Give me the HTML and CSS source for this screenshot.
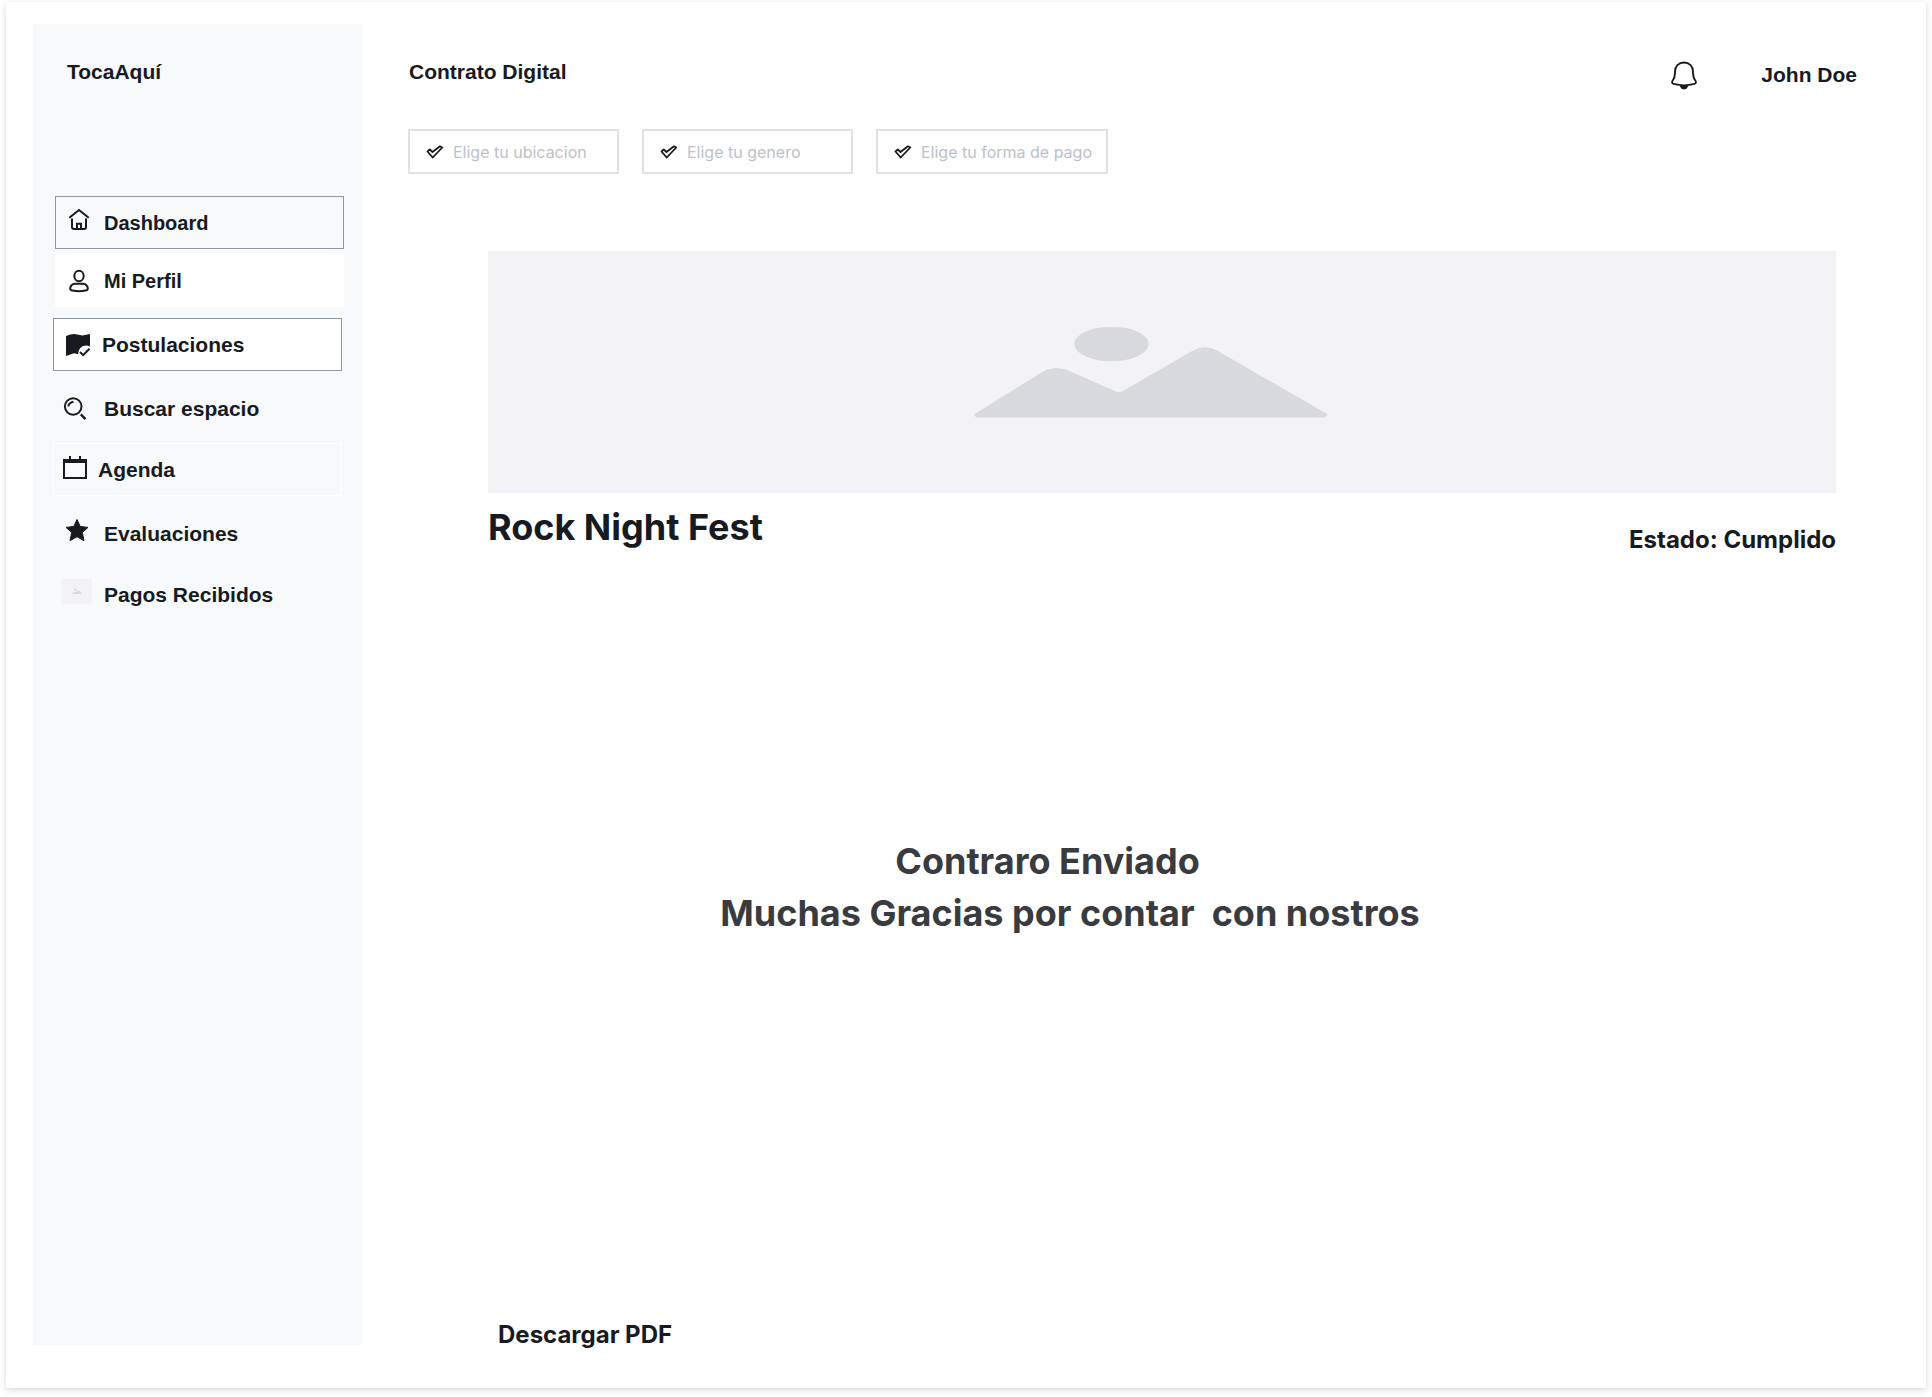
FILE: index.html
```html
<!DOCTYPE html>
<html lang="es">
<head>
<meta charset="utf-8">
<meta name="viewport" content="width=device-width, initial-scale=1">
<title>TocaAquí - Contrato Digital</title>
<link rel="stylesheet" href="styles.css">
</head>
<body>
<div class="page">
  <aside class="sidebar">
    <a class="brand" href="#">TocaAquí</a>
    <nav class="nav" aria-label="Principal">
      <a class="nav-item nav-item--small nav-item--outlined" href="#">
        <svg class="nav-icon" viewBox="0 0 36 35" fill="none" stroke="currentColor" stroke-width="2" aria-hidden="true"><path d="M9.3 12.8 19 5l9.700 7.800M12 13.500V22q0 2 2 2h10q2 0 2-2V13.500M17 24v-5.200h4V24"/></svg>
        <span>Dashboard</span>
      </a>
      <a class="nav-item nav-item--small nav-item--filled" href="#">
        <svg class="nav-icon" viewBox="0 0 36 35" fill="none" stroke="currentColor" stroke-width="2" aria-hidden="true"><ellipse cx="19" cy="13" rx="4.700" ry="5.200"/><path d="M15 20.800h8c3.200 0 4.800 2.700 4.800 4.700 0 1.300-1 1.900-2.300 2.100-4.300.7-8.700.7-13 0-1.300-.2-2.300-.8-2.300-2.100 0-2 1.600-4.700 4.800-4.700z"/></svg>
        <span>Mi Perfil</span>
      </a>
      <a class="nav-item nav-item--spaced nav-item--wide nav-item--outlined nav-item--filled" href="#" aria-current="page">
        <svg class="nav-icon" viewBox="0 0 36 35" aria-hidden="true"><path fill="currentColor" d="M8 9q4-2 8.500-2l8 1.600L32 7v12.500q-3.500-2-7.500-.2-4.200 2.500-4.300 8l-4.200-1L8 29z"/><path fill="none" stroke="currentColor" stroke-width="2" d="m22 25 3.200 3.200 6.300-6.400"/></svg>
        <span>Postulaciones</span>
      </a>
      <a class="nav-item nav-item--spaced" href="#">
        <svg class="nav-icon" viewBox="0 0 36 35" fill="none" stroke="currentColor" stroke-width="2" aria-hidden="true"><circle cx="13.200" cy="15.500" r="8.300"/><path d="M8.300 15.500q.5-4 5.200-4.800"/><path stroke-width="2.400" d="m20.800 23.300 4.700 4.900"/></svg>
        <span>Buscar espacio</span>
      </a>
      <a class="nav-item nav-item--loose nav-item--wide nav-item--light nav-item--tight" href="#">
        <svg class="nav-icon" viewBox="0 0 36 35" aria-hidden="true"><path fill="currentColor" fill-rule="evenodd" d="M5 7h6V4h2v3h8V4h2v3h6v20H5zM7 11v14h20V11z"/></svg>
        <span>Agenda</span>
      </a>
      <a class="nav-item nav-item--spaced" href="#">
        <svg class="nav-icon" viewBox="0 0 36 35" aria-hidden="true"><path fill="currentColor" stroke="currentColor" stroke-linejoin="round" d="m17 3.500 3.200 6.900 7.800 1-5.700 5.100 1.700 8.200-7-4-7 4 1.700-8.200L6 11.400l7.800-1z"/></svg>
        <span>Evaluaciones</span>
      </a>
      <a class="nav-item nav-item--loose" href="#">
        <svg class="nav-icon" viewBox="0 0 36 35" aria-hidden="true"><path fill="#f3f3f5" d="M1 2h31v25H1z"/><circle cx="15.500" cy="12.800" r="1.200" fill="#d9dade"/><path fill="#d9dade" d="m11.500 17 3-2.500 1.500.8 2.500-2.300 3.500 4z"/></svg>
        <span>Pagos Recibidos</span>
      </a>
    </nav>
  </aside>

  <main class="main">
    <header class="header">
      <h1 class="title">Contrato Digital</h1>
      <div class="user">
        <button class="bell" type="button" aria-label="Notificaciones">
          <svg viewBox="0 0 28 30" width="28" height="30" fill="none" stroke="currentColor" stroke-width="1.900" aria-hidden="true"><path d="M14 2.500C8.500 2.500 5 6.500 5 11.500c0 4.500-.3 6.300-2 8.500-1.500 2-1.200 3.300.7 3.900 6 1.700 14.600 1.700 20.600 0 1.900-.6 2.200-1.900.7-3.900-1.700-2.200-2-4-2-8.500 0-5-3.500-9-9-9zM11 26.500q.7 2 3 2t3-2z"/></svg>
        </button>
        <span class="user-name">John Doe</span>
      </div>
    </header>

    <form class="filters">
      <label class="filter">
        <svg class="check" viewBox="0 0 18 14" aria-hidden="true"><path d="M1.500 6.500 3.800 4.500 6.500 7 14 1.300l2.300 1.200L6.700 12.500z"/></svg>
        <input class="filter-input" type="text" placeholder="Elige tu ubicacion" aria-label="Ubicacion">
      </label>
      <label class="filter">
        <svg class="check" viewBox="0 0 18 14" aria-hidden="true"><path d="M1.500 6.500 3.800 4.500 6.500 7 14 1.300l2.300 1.200L6.700 12.500z"/></svg>
        <input class="filter-input" type="text" placeholder="Elige tu genero" aria-label="Genero">
      </label>
      <label class="filter filter--wide">
        <svg class="check" viewBox="0 0 18 14" aria-hidden="true"><path d="M1.500 6.500 3.800 4.500 6.500 7 14 1.300l2.300 1.200L6.700 12.500z"/></svg>
        <input class="filter-input" type="text" placeholder="Elige tu forma de pago" aria-label="Forma de pago">
      </label>
    </form>

    <section class="event">
      <div class="banner">
        <svg viewBox="0 0 354 91" width="354" height="91" fill="#d9dade" aria-hidden="true"><ellipse cx="137.500" cy="17" rx="37.300" ry="17.200"/><path d="M1.500 86.500 69 44.500Q80 38.500 92 42.500L142 64.500q3 1.200 6 0L219 23.500q12-6.500 24 0L352.500 86.500q3 3-2.500 4H4q-5.500-1-2.500-4z"/></svg>
      </div>
      <div class="event-head">
        <h2 class="event-name">Rock Night Fest</h2>
        <p class="status">Estado: Cumplido</p>
      </div>
      <div class="message">
        <p class="message-line message-line--first">Contraro Enviado</p>
        <p class="message-line">Muchas Gracias por contar&nbsp; con nostros</p>
      </div>
      <a class="download" href="#">Descargar PDF</a>
    </section>
  </main>
</div>
</body>
</html>
```
FILE: styles.css
```css
* {
  box-sizing: border-box;
}

body {
  margin: 0;
  min-height: 100vh;
  padding: 2px 6px 9px;
  display: flex;
  background: #fff;
  color: #171a1f;
  font-family: Inter, "Liberation Sans", sans-serif;
}

h1, h2, p {
  margin: 0;
}

a {
  color: inherit;
  text-decoration: none;
}

.page {
  flex: 1;
  display: flex;
  gap: 46px;
  padding: 22px 69px 43px 27px;
  background: #fff;
  box-shadow: 0 2px 6px rgba(23, 26, 31, 0.16);
}

.brand,
.nav-item,
.title,
.user-name {
  font-family: "Liberation Sans", Arial, sans-serif;
  font-size: 21px;
  font-weight: 700;
  line-height: 24px;
}

/* Sidebar */

.sidebar {
  flex: 0 0 330px;
  padding: 36px 19px 36px 20px;
  background: #f8f9fb;
}

.brand {
  display: block;
  padding-left: 14px;
}

.nav {
  display: flex;
  flex-direction: column;
  gap: 5px;
  margin-top: 112px;
}

.nav-item {
  display: flex;
  align-items: center;
  gap: 8px;
  height: 53px;
  margin-left: 2px;
  padding-left: 4px;
  border: 1px solid transparent;
}

.nav-item--small { font-size: 20px; }
.nav-item--spaced { margin-top: 6px; }
.nav-item--loose { margin-top: 3px; }
.nav-item--tight { gap: 4px; }
.nav-item--filled { background: #fff; }
.nav-item--outlined { border-color: #9095a0; }
.nav-item--light { border-color: #fff; }

.nav-item--wide {
  margin-left: 0;
  margin-right: 2px;
}

.nav-icon {
  flex: none;
  width: 36px;
  height: 35px;
}

/* Main column */

.main {
  flex: 1;
  min-width: 0;
  display: flex;
  flex-direction: column;
  padding-top: 36px;
}

.header {
  display: flex;
  justify-content: space-between;
  align-items: flex-start;
}

.user {
  display: flex;
  align-items: center;
  gap: 63px;
}

.bell {
  display: flex;
  padding: 0;
  border: 0;
  background: none;
  color: inherit;
}

/* Filters */

.filters {
  display: flex;
  flex-wrap: wrap;
  gap: 23px;
  margin: 39px 0 0 -1px;
}

.filter {
  display: flex;
  align-items: center;
  gap: 9px;
  width: 211px;
  height: 45px;
  padding: 0 8px 0 16px;
  border: 2px solid #dee1e6;
  border-radius: 1px;
}

.filter--wide {
  width: 232px;
}

.check {
  flex: none;
  width: 18px;
  height: 14px;
  fill: none;
  stroke: #171a1f;
  stroke-width: 1.8;
  stroke-linejoin: round;
}

.filter-input {
  flex: 1;
  min-width: 0;
  padding: 0;
  border: 0;
  outline: 0;
  background: none;
  color: inherit;
  font: 400 16px/24px Inter, sans-serif;
}

.filter-input::placeholder {
  color: #bcc1ca;
  opacity: 1;
}

/* Event */

.event {
  flex: 1;
  display: flex;
  flex-direction: column;
  margin: 77px 21px 0 79px;
}

.banner {
  display: flex;
  align-items: center;
  justify-content: center;
  height: 242px;
  padding-right: 22px;
  background: #f3f3f5;
}

.event-head {
  display: flex;
  justify-content: space-between;
  align-items: flex-start;
  margin-top: 12px;
}

.event-name {
  font-size: 36px;
  font-weight: 700;
  line-height: 44px;
}

.status {
  margin-top: 21px;
  font-size: 24px;
  font-weight: 700;
  line-height: 28px;
}

.message {
  flex: 1;
  display: flex;
  flex-direction: column;
  align-items: center;
  justify-content: center;
  padding: 0 184px 106px 0;
  color: #3a3b3f;
}

.message-line {
  font-size: 36px;
  font-weight: 700;
  line-height: 52px;
}

.message-line--first {
  padding-right: 45px;
}

.download {
  align-self: flex-start;
  margin-left: 10px;
  font-size: 24px;
  font-weight: 700;
  line-height: 20px;
}
```
